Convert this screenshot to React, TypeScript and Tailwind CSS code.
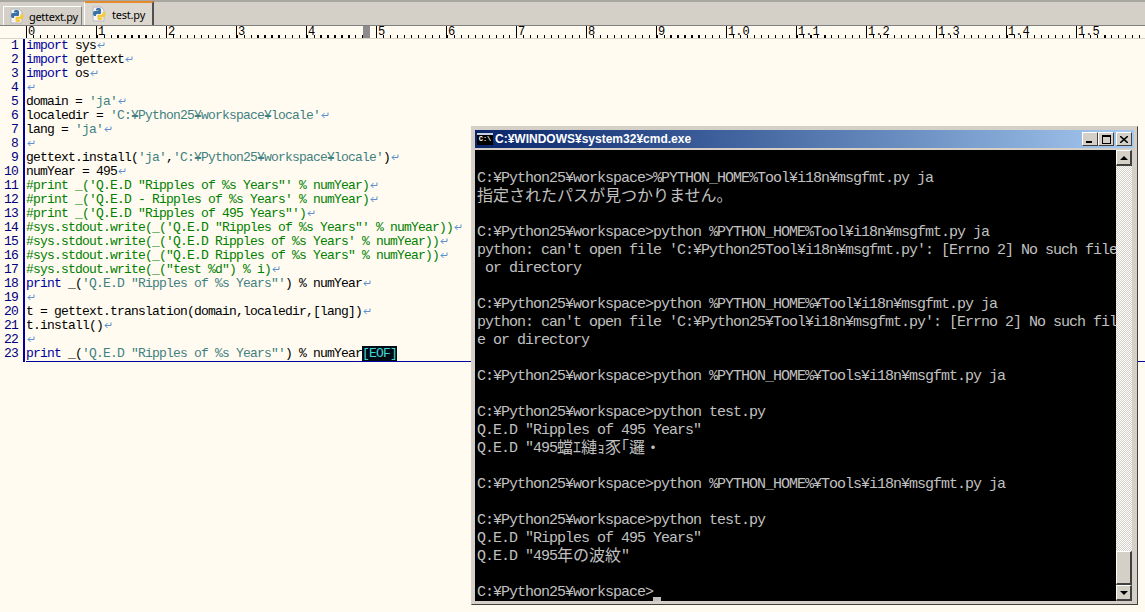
const KW = "text-[#0000a0]";
const STR = "text-[#3f8080]";
const CMT = "text-[#008000]";

type Part = [string, string?];

const code: Part[][] = [
  [["import", KW], [" sys"]],
  [["import", KW], [" gettext"]],
  [["import", KW], [" os"]],
  [],
  [["domain = "], ["'ja'", STR]],
  [["localedir = "], ["'C:¥Python25¥workspace¥locale'", STR]],
  [["lang = "], ["'ja'", STR]],
  [],
  [["gettext.install("], ["'ja'", STR], [","], ["'C:¥Python25¥workspace¥locale'", STR], [")"]],
  [["numYear = 495"]],
  [["#print _('Q.E.D \"Ripples of %s Years\"' % numYear)", CMT]],
  [["#print _('Q.E.D - Ripples of %s Years' % numYear)", CMT]],
  [["#print _('Q.E.D \"Ripples of 495 Years\"')", CMT]],
  [["#sys.stdout.write(_('Q.E.D \"Ripples of %s Years\"' % numYear))", CMT]],
  [["#sys.stdout.write(_('Q.E.D Ripples of %s Years' % numYear))", CMT]],
  [["#sys.stdout.write(_(\"Q.E.D Ripples of %s Years\" % numYear))", CMT]],
  [["#sys.stdout.write(_(\"test %d\") % i)", CMT]],
  [["print", KW], [" _("], ["'Q.E.D \"Ripples of %s Years\"'", STR], [") % numYear"]],
  [],
  [["t = gettext.translation(domain,localedir,[lang])"]],
  [["t.install()"]],
  [],
  [["print", KW], [" _("], ["'Q.E.D \"Ripples of %s Years\"'", STR], [") % numYear"]],
];

const consoleLines: (string | { jp: string; pre?: string; post?: string })[] = [
  "",
  "C:¥Python25¥workspace>%PYTHON_HOME%Tool¥i18n¥msgfmt.py ja",
  { jp: "指定されたパスが見つかりません。" },
  "",
  "C:¥Python25¥workspace>python %PYTHON_HOME%Tool¥i18n¥msgfmt.py ja",
  "python: can't open file 'C:¥Python25Tool¥i18n¥msgfmt.py': [Errno 2] No such file",
  " or directory",
  "",
  "C:¥Python25¥workspace>python %PYTHON_HOME%¥Tool¥i18n¥msgfmt.py ja",
  "python: can't open file 'C:¥Python25¥Tool¥i18n¥msgfmt.py': [Errno 2] No such fil",
  "e or directory",
  "",
  "C:¥Python25¥workspace>python %PYTHON_HOME%¥Tools¥i18n¥msgfmt.py ja",
  "",
  "C:¥Python25¥workspace>python test.py",
  "Q.E.D \"Ripples of 495 Years\"",
  { pre: "Q.E.D \"495", jp: "蟷ｴ縺ｮ豕｢邏・" },
  "",
  "C:¥Python25¥workspace>python %PYTHON_HOME%¥Tools¥i18n¥msgfmt.py ja",
  "",
  "C:¥Python25¥workspace>python test.py",
  "Q.E.D \"Ripples of 495 Years\"",
  { pre: "Q.E.D \"495", jp: "年の波紋", post: "\"" },
  "",
  "C:¥Python25¥workspace>",
];

function PyIcon() {
  return (
    <svg width="16" height="16" viewBox="0 0 16 16" className="shrink-0">
      <path d="M2 1h8l3 3v11H2z" fill="#f4f4f4" stroke="#b8b8c0" strokeWidth="1" />
      <path d="M5 3.500c0-1 1-1.500 2.500-1.500S10 2.500 10 3.500V7c0 .7-.5 1-1.200 1H6.300C5.400 8 5 8.600 5 9.300V10H3.500C2.500 10 2 9 2 7.500S2.500 5 3.500 5H7.500V4.500H5z" fill="#3a72a8" />
      <path d="M13 6c1 0 1.500 1 1.500 2.500S14 11 13 11H9v.5h2.500v1c0 1-1 1.500-2.500 1.500s-2.500-.5-2.500-1.500V9.800c0-.700.500-1 1.200-1h2.500c.900 0 1.300-.600 1.300-1.300V6z" fill="#f5c93a" />
    </svg>
  );
}

function Eol() {
  return (
    <svg width="8" height="7" viewBox="0 0 8 7" className="inline-block align-baseline ml-[1px]">
      <path d="M7 0.500V3.500H1M3.500 1L1 3.500L3.500 6" fill="none" stroke="#5b8fd0" strokeWidth="1" />
    </svg>
  );
}

function Ruler() {
  return (
    <div className="flex h-[13px] bg-[#fffbf0] pl-[26px] border-b border-[#d8d4c8] relative overflow-hidden">
      {Array.from({ length: 16 }, (_, i) => (
        <div
          key={i}
          className="w-[70px] shrink-0 h-[12px] border-l border-black pl-[1px] text-[12px] leading-[12px] text-black bg-[repeating-linear-gradient(90deg,#000_0_1px,transparent_1px_7px)] bg-[length:70px_3px] bg-bottom bg-no-repeat"
        >
          {i < 10 ? i : `1.${i - 10}`}
        </div>
      ))}
      <div className="absolute left-[363px] top-0 w-[7px] h-[12px] bg-[#8c8c8c]" />
    </div>
  );
}

function Scrollbar() {
  return (
    <div className="w-[16px] h-full flex flex-col bg-[repeating-conic-gradient(#d4d0c8_0_25%,#ffffff_0_50%)] bg-[length:2px_2px]">
      <div className="h-[16px] bg-[#d4d0c8] border-t border-l border-white border-r-2 border-b-2 border-r-[#404040] border-b-[#404040] flex items-center justify-center">
        <div className="w-0 h-0 border-x-[4px] border-x-transparent border-b-[4px] border-b-black" />
      </div>
      <div className="flex-1" />
      <div className="h-[34px] bg-[#d4d0c8] border-t border-l border-white border-r-2 border-b-2 border-r-[#404040] border-b-[#404040]" />
      <div className="h-[16px] bg-[#d4d0c8] border-t border-l border-white border-r-2 border-b-2 border-r-[#404040] border-b-[#404040] flex items-center justify-center">
        <div className="w-0 h-0 border-x-[4px] border-x-transparent border-t-[4px] border-t-black" />
      </div>
    </div>
  );
}

function CmdWindow() {
  return (
    <div className="absolute left-[471px] top-[126px] w-[667px] h-[479px] bg-[#d4d0c8] border border-t-[#d4d0c8] border-l-[#d4d0c8] border-r-[#404040] border-b-[#404040] p-[3px] flex flex-col font-['Liberation_Mono','Noto_Sans_CJK_JP',monospace]">
      <div className="h-[18px] flex items-center pl-[2px] pr-[2px] bg-gradient-to-r from-[#0a246a] to-[#a6caf0] shrink-0">
        <div className="w-[16px] h-[12px] bg-black border-t-2 border-[#c8d0e0] text-white text-[7px] leading-[9px] font-bold text-center shrink-0">
          C:\
        </div>
        <span className="ml-[2px] -mt-[1px] text-white text-[12px] font-bold font-['Liberation_Sans',sans-serif] leading-[18px]">
          C:¥WINDOWS¥system32¥cmd.exe
        </span>
        <div className="ml-auto flex">
          {["min", "max", "close"].map((k) => (
            <div
              key={k}
              className={`w-[16px] h-[14px] bg-[#d4d0c8] border border-t-white border-l-white border-r-[#404040] border-b-[#404040] flex items-center justify-center ${k === "close" ? "ml-[2px]" : ""}`}
            >
              {k === "min" && <div className="w-[6px] h-[2px] bg-black mt-[6px] -ml-[2px]" />}
              {k === "max" && <div className="w-[9px] h-[9px] border border-black border-t-2" />}
              {k === "close" && (
                <svg width="8" height="7" viewBox="0 0 8 7">
                  <path d="M0 0L8 7M8 0L0 7" stroke="#000" strokeWidth="1.500" />
                </svg>
              )}
            </div>
          ))}
        </div>
      </div>
      <div className="flex flex-1 min-h-0 mt-[2px]">
        <div className="w-[641px] h-full bg-black pl-[2px] pt-[2px] overflow-hidden">
          {consoleLines.map((l, i) => (
            <div key={i} className="h-[18px] leading-[18px] text-[15px] tracking-[-1px] text-[#c0c0c0] whitespace-pre flex">
              {typeof l === "string" ? (
                <span>{l}</span>
              ) : (
                <>
                  {l.pre && <span>{l.pre}</span>}
                  <span className="h-[18px] leading-[18px] -translate-y-[3px] text-[16px] tracking-normal font-['Noto_Sans_CJK_JP',sans-serif]">{l.jp}</span>
                  {l.post && <span>{l.post}</span>}
                </>
              )}
              {i === 24 && <span className="w-[8px] h-[5px] bg-[#c0c0c0] mt-[13px]" />}
            </div>
          ))}
        </div>
        <Scrollbar />
      </div>
    </div>
  );
}

export default function App() {
  return (
    <div className="relative w-[1145px] h-[612px] overflow-hidden bg-[#fffbf0] font-['Liberation_Mono','Noto_Sans_CJK_JP',monospace]">
      <div className="h-[26px] bg-[#d4d0c8] border-t-2 border-[#a8a8a0] flex items-end pl-[3px] font-['Noto_Sans','Noto_Sans_CJK_JP',sans-serif] text-[11px] text-black border-b border-b-[#808080]">
        <div className="w-[79px] h-[19px] border-t border-l border-white border-r border-r-[#808080] flex items-center pl-[5px] gap-[4px] bg-[#d4d0c8]">
          <PyIcon />
          <span className="leading-none mt-[1px] tracking-[-0.3px]">gettext.py</span>
        </div>
        <div className="w-[70px] h-[24px] ml-[2px] border-t-2 border-[#e68a2e] border-r-2 border-r-[#505050] border-l border-l-white flex items-center pl-[6px] gap-[5px] bg-[#dcd8d0]">
          <PyIcon />
          <span className="leading-none mt-[1px] tracking-[-0.2px]">test.py</span>
        </div>
      </div>
      <Ruler />
      <div className="flex text-[13px] tracking-[-0.8px] leading-[14px] text-black">
        <div className="w-[25px] text-right pr-[5px] text-[#000080] shrink-0 border-r-2 border-[#0000a0]">
          {code.map((_, i) => (
            <div key={i} className="h-[14px]">{i + 1}</div>
          ))}
        </div>
        <div className="flex-1 pl-[1px]">
          {code.map((parts, i) => (
            <div
              key={i}
              className={`whitespace-pre ${i === 22 ? "h-[15px] border-b border-[#0000a0]" : "h-[14px]"}`}
            >
              {parts.map((p, j) => (
                <span key={j} className={p[1]}>{p[0]}</span>
              ))}
              {i !== 22 && <Eol />}
              {i === 22 && <span className="bg-[#000c14] text-[#40d8d8]">[EOF]</span>}
            </div>
          ))}
        </div>
      </div>
      <CmdWindow />
    </div>
  );
}
